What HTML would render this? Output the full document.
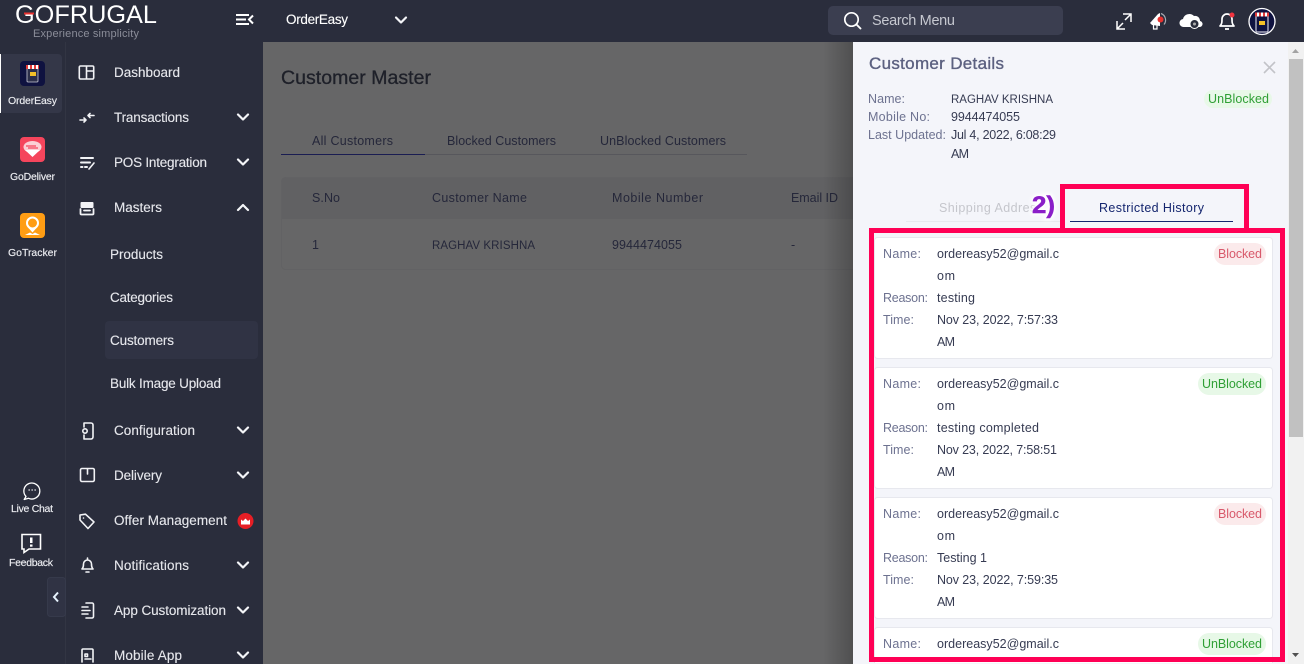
<!DOCTYPE html>
<html><head><meta charset="utf-8"><title>Customer Master</title>
<style>
html,body{margin:0;padding:0;width:1304px;height:664px;overflow:hidden;background:#666}
svg{display:block;overflow:hidden}
text{font-family:"Liberation Sans",sans-serif}
.m{font-size:13.5px;fill:#e6e7ec;stroke:#e6e7ec;stroke-width:.12}
.l{font-size:10.5px;fill:#ecedf1;stroke:#ecedf1;stroke-width:.15}
.t{font-size:12.5px;fill:#25273a}
.lb{font-size:12.5px;fill:#6d7290}
.v{font-size:12.5px;fill:#363b52}
.ic{fill:none;stroke:#f2f3f6;stroke-width:1.6;stroke-linecap:round;stroke-linejoin:round}
.ch{fill:none;stroke:#f4f5f8;stroke-width:2.2;stroke-linecap:round;stroke-linejoin:round}
.card{fill:#fff;stroke:#e7e8ee;stroke-width:1}
</style></head><body>
<svg width="1304" height="664" viewBox="0 0 1304 664" xmlns="http://www.w3.org/2000/svg">
<defs>
<clipPath id="pc"><rect x="853" y="42" width="436" height="622"/></clipPath>
<clipPath id="mc"><rect x="66" y="640" width="197" height="24"/></clipPath>
<filter id="glow" x="-40%" y="-40%" width="180%" height="180%"><feGaussianBlur stdDeviation="1.6"/></filter>
<linearGradient id="sh" x1="0" x2="1"><stop offset="0" stop-color="#000" stop-opacity="0"/><stop offset="1" stop-color="#000" stop-opacity=".22"/></linearGradient>
</defs>

<!-- main -->
<rect width="1304" height="664" fill="#666667"/>
<text x="281" y="84" style="font-size:19.5px;fill:#1e2029;stroke:#1e2029;stroke-width:.3" textLength="150">Customer Master</text>
<text class="t" x="312" y="145" textLength="81">All Customers</text>
<text class="t" x="447" y="145" textLength="109">Blocked Customers</text>
<text class="t" x="600" y="145" textLength="126">UnBlocked Customers</text>
<rect x="281" y="154" width="466" height="1" fill="#57575c"/>
<rect x="281" y="154" width="144" height="1" fill="#1a1d52"/>
<rect x="281.500" y="177.500" width="620" height="92" rx="4" fill="#666667" stroke="#626264"/>
<path d="M281.500 219V181.500a4 4 0 0 1 4-4H860V219Z" fill="#616163"/>
<text class="t" x="312" y="202" textLength="28">S.No</text>
<text class="t" x="432" y="202" textLength="95">Customer Name</text>
<text class="t" x="612" y="202" textLength="91">Mobile Number</text>
<text class="t" x="791" y="202" textLength="47">Email ID</text>
<text class="t" x="312" y="249">1</text>
<text class="t" x="432" y="249" style="font-size:11.500px" textLength="103">RAGHAV KRISHNA</text>
<text class="t" x="612" y="249" textLength="70">9944474055</text>
<text class="t" x="791" y="249">-</text>
<rect x="823" y="42" width="30" height="622" fill="url(#sh)"/>

<!-- sidebars -->
<rect x="0" y="42" width="263" height="622" fill="#2a2d3c"/>
<rect x="65" y="42" width="1" height="622" fill="#323543"/>
<rect x="0" y="54" width="62" height="59" rx="4" fill="#343748"/>
<rect x="0" y="54" width="1" height="59" fill="#fff"/>
<rect x="47.500" y="577.500" width="18" height="39" rx="3" fill="#303344" stroke="#363a4b"/>
<path d="M58 592.500l-4 4.500 4 4.500" fill="none" stroke="#e8f4ff" stroke-width="2"/>

<!-- header -->
<rect x="0" y="0" width="1304" height="42" fill="#2a2d3c"/>
<text x="15" y="23" style="font-size:25px;fill:#fff" textLength="142" lengthAdjust="spacingAndGlyphs">GOFRUGAL</text>
<rect x="24" y="12.500" width="10" height="2" fill="#e8312f"/>
<text x="33" y="37" style="font-size:11px;fill:#8b8d99" textLength="106">Experience simplicity</text>
<path d="M236 15h13M236 19.500h10M236 24h13" stroke="#fff" stroke-width="2"/>
<path d="M253 15.500l-4 4 4 4" fill="none" stroke="#fff" stroke-width="2"/>
<text x="286" y="24" style="font-size:13.500px;fill:#fff;stroke:#fff;stroke-width:.12" textLength="62">OrderEasy</text>
<path class="ch" d="M396 17.500l5 5 5-5"/>
<rect x="828" y="6" width="235" height="29" rx="5" fill="#3b3e50"/>
<circle cx="851.500" cy="19.500" r="6.700" fill="none" stroke="#fff" stroke-width="1.700"/>
<path d="M856.500 24.500l4 4" stroke="#fff" stroke-width="1.900" stroke-linecap="round"/>
<text x="872" y="25" style="font-size:14.500px;fill:#c6c8d0" textLength="83">Search Menu</text>
<!-- header right icons -->
<path d="M1123 14h8v8M1131 14l-6 6M1125 29h-8v-8M1117 29l6-6" fill="none" stroke="#fff" stroke-width="1.500"/>
<path d="M1150 23l8-9 2-1v13l-8-1z" fill="#fff"/>
<path d="M1153.500 25v4h3.500v-3.500" fill="none" stroke="#fff" stroke-width="1.200"/>
<circle cx="1160.500" cy="19.500" r="3" fill="#e8312f"/>
<path d="M1161 13.500a7 7 0 0 1 3 11" fill="none" stroke="#a7a9b2" stroke-width="1.200"/>
<path d="M1184 27a4 4 0 0 1-1-8 6.500 6.500 0 0 1 11-3 5 5 0 0 1 6 5 3 3 0 0 1-1 6z" fill="#fff"/>
<circle cx="1194.500" cy="24" r="4.500" fill="#2a2d3c" stroke="#fff" stroke-width="1"/>
<circle cx="1194.500" cy="24" r="1.500" fill="#aaa"/>
<path d="M1220 26c2-2 2-4 2-7a5 5 0 0 1 10 0c0 3 0 5 2 7z" fill="none" stroke="#fff" stroke-width="1.700" stroke-linejoin="round"/>
<path d="M1225 29h4" stroke="#fff" stroke-width="1.800"/>
<circle cx="1232" cy="15" r="2.500" fill="#f0333f"/>
<circle cx="1262" cy="21.500" r="13" fill="#0f1240" stroke="#fff" stroke-width="1.300"/>
<rect x="1256" y="15" width="12" height="17" rx="1" fill="none" stroke="#c9cad6" stroke-width="1.200"/>
<rect x="1255" y="12.500" width="14" height="4" fill="#e23b3b"/>
<path d="M1257 12.500h2v4h-2zM1261 12.500h2v4h-2zM1265 12.500h2v4h-2z" fill="#fff"/>
<rect x="1259" y="21" width="6" height="4" fill="#f3c028"/>

<!-- left apps -->
<rect x="20" y="61" width="25" height="25" rx="4" fill="#0f1240"/>
<rect x="27" y="66" width="11" height="16" rx="1" fill="#2c2f4a" stroke="#c9cad6" stroke-width=".8"/>
<rect x="26" y="65" width="13" height="4" fill="#e23b3b"/>
<path d="M28 65h2v4h-2zM32 65h2v4h-2zM36 65h2v4h-2z" fill="#fff"/>
<rect x="30" y="72" width="6" height="4" fill="#f3c028"/>
<text class="l" x="8" y="104" textLength="49">OrderEasy</text>
<rect x="20" y="137" width="25" height="25" rx="4" fill="#f5455c"/>
<ellipse cx="32.500" cy="147" rx="9" ry="6" fill="#fbd0d5"/>
<path d="M25 150h15l-7.500 7z" fill="#fff"/>
<path d="M26 146h10M28 148h10" stroke="#f5455c" stroke-width="1.300"/>
<text class="l" x="10" y="180" textLength="45">GoDeliver</text>
<rect x="20" y="213" width="25" height="25" rx="4" fill="#ff9d14"/>
<circle cx="32.500" cy="223" r="5.500" fill="none" stroke="#fff" stroke-width="2"/>
<path d="M28.500 228l4 4.500 4-4.500" fill="#fff"/>
<path d="M25 235l5-2.500 2.500 1.500 2.500-1.500 5 2.500z" fill="#fff"/>
<text class="l" x="8" y="256" textLength="49">GoTracker</text>
<path d="M26 496.500a8 8 0 1 1 2.500 1.800l-4.300 1.200z" fill="none" stroke="#fff" stroke-width="1.300" stroke-linejoin="round"/>
<path d="M28.500 490h1.300M31.500 490h1.300M34.500 490h1.300" stroke="#fff" stroke-width="1.200"/>
<text class="l" x="11" y="512" textLength="42">Live Chat</text>
<path d="M22 534.500h18.500v14.500H29l-5 3.500v-3.500h-2z" fill="none" stroke="#fff" stroke-width="1.600"/>
<rect x="30" y="537.500" width="2.500" height="5.500" fill="#fff"/><rect x="30" y="544.500" width="2.500" height="2.200" fill="#fff"/>
<text class="l" x="9" y="566" textLength="44">Feedback</text>

<!-- menu -->
<text class="m" x="114" y="77" textLength="66">Dashboard</text>
<text class="m" x="114" y="122" textLength="75">Transactions</text>
<text class="m" x="114" y="167" textLength="93">POS Integration</text>
<text class="m" x="114" y="212" textLength="48">Masters</text>
<text class="m" x="110" y="259" textLength="53">Products</text>
<text class="m" x="110" y="302" textLength="63">Categories</text>
<rect x="105" y="321" width="153" height="38" rx="4" fill="#303344"/>
<text class="m" x="110" y="345" textLength="64">Customers</text>
<text class="m" x="110" y="388" textLength="111">Bulk Image Upload</text>
<text class="m" x="114" y="435" textLength="81">Configuration</text>
<text class="m" x="114" y="480" textLength="48">Delivery</text>
<text class="m" x="114" y="525" textLength="113">Offer Management</text>
<text class="m" x="114" y="570" textLength="75">Notifications</text>
<text class="m" x="114" y="615" textLength="112">App Customization</text>
<text class="m" x="114" y="660" textLength="68">Mobile App</text>

<path class="ch" d="M238 114.500l5 5 5-5M238 159.500l5 5 5-5M238 427.500l5 5 5-5M238 472.500l5 5 5-5M238 562.500l5 5 5-5M238 607.500l5 5 5-5M238 652.500l5 5 5-5M238 210l5-5 5 5"/>
<circle cx="245.500" cy="521" r="8" fill="#e61e25"/>
<path d="M241 524.500v-5l2 1.500 2.500-2.500 2.500 2.500 2-1.500v5z" fill="#fff"/>

<!-- menu icons -->
<path class="ic" d="M80.500 66h12a1.200 1.200 0 0 1 1.200 1.200v10.600a1.200 1.200 0 0 1-1.200 1.200h-12a1.200 1.200 0 0 1-1.200-1.200V67.200a1.200 1.200 0 0 1 1.200-1.200zM86.500 66v13M86.500 71h7"/>
<path class="ic" d="M80 120h6M84 118l2 2-2 2M94 115.500h-6M90 113.500l-2 2 2 2"/>
<path class="ic" d="M81 158h12M81 162.500h9M81 167h1.500M85 167h2" style="stroke-width:2"/>
<path class="ic" d="M89 169l5-6"/>
<rect x="80.500" y="202" width="13" height="6" rx="1" fill="#f2f3f6"/>
<path class="ic" d="M80.500 209v4.500a1 1 0 0 0 1 1h11a1 1 0 0 0 1-1V209M84 210.500h6" style="stroke-width:1.800"/>
<path class="ic" d="M84 423h7a2 2 0 0 1 2 2v12a2 2 0 0 1-2 2h-7v-4M84 423v4"/>
<circle cx="85" cy="431" r="2.200" class="ic"/>
<path class="ic" d="M82 468.500h11a1.500 1.500 0 0 1 1.300 1.500v10a1.500 1.500 0 0 1-1.500 1.500H82a1.500 1.500 0 0 1-1.500-1.500v-10a1.500 1.500 0 0 1 1.500-1.500zM87.500 469v5"/>
<path class="ic" d="M80 515l5.500-.8 8.500 7.800-6 6.500-8-8.500z"/>
<circle cx="83.500" cy="518" r=".8" fill="#f2f3f6"/>
<path class="ic" d="M82 569c1.500-1.500 1.500-3 1.500-5a4 4 0 0 1 8 0c0 2 0 3.500 1.500 5zM87.500 558v1.500M86 572h3"/>
<path class="ic" d="M86 603h6a1.500 1.500 0 0 1 1.500 1.500v12a1.500 1.500 0 0 1-1.500 1.500h-6M82 607h6M82 610.500h8M82 614h6"/>
<g clip-path="url(#mc)"><path class="ic" d="M82 662V650a1 1 0 0 1 1-1h9a1 1 0 0 1 1 1v12M85 654h2.500v2.500H85zM85 659h6"/></g>

<!-- right panel -->
<rect x="853" y="42" width="436" height="622" fill="#f4f5fa"/>
<rect x="1288" y="42" width="16" height="622" fill="#f1f1f1"/>
<rect x="1289" y="59" width="14" height="378" fill="#c1c1c1"/>
<path d="M1292 53l3.500-4 3.500 4z" fill="#a3a3a3"/>
<path d="M1292 653l3.500 4 3.500-4z" fill="#505050"/>

<text x="869" y="69" style="font-size:17px;fill:#5c6180;stroke:#5c6180;stroke-width:.35" textLength="135">Customer Details</text>
<path d="M1264 62l11 11M1275 62l-11 11" stroke="#c2c3c8" stroke-width="1.600"/>

<text class="lb" x="868" y="103" textLength="37">Name:</text>
<text class="lb" x="868" y="121" textLength="62">Mobile No:</text>
<text class="lb" x="868" y="139" textLength="78">Last Updated:</text>
<text class="v" x="951" y="103" style="font-size:11.500px" textLength="102">RAGHAV KRISHNA</text>
<text class="v" x="951" y="121" textLength="69">9944474055</text>
<text class="v" x="951" y="139" textLength="105">Jul 4, 2022, 6:08:29</text>
<text class="v" x="951" y="158" textLength="18">AM</text>
<rect x="1204" y="90" width="68" height="18" rx="9" fill="#e8f8e8"/>
<text x="1208" y="103" style="font-size:12.500px;fill:#2f9f35" textLength="61">UnBlocked</text>

<text x="939" y="212" style="font-size:12.500px;fill:#c5c6cc" textLength="104">Shipping Address</text>
<rect x="906" y="221" width="154" height="1" fill="#e8e9ee"/>
<text x="1099" y="212" style="font-size:12.500px;fill:#14256e" textLength="105">Restricted History</text>
<rect x="1070" y="221" width="163" height="1" fill="#14256e"/>

<g clip-path="url(#pc)">
<rect class="card" x="874.500" y="237.500" width="398" height="121" rx="3"/>
<rect class="card" x="874.500" y="367.500" width="398" height="121" rx="3"/>
<rect class="card" x="874.500" y="497.500" width="398" height="121" rx="3"/>
<path class="card" d="M874.500 663v-32.500a3 3 0 0 1 3-3h392a3 3 0 0 1 3 3V663"/>

<!-- card 1 -->
<text class="lb" x="883" y="258" textLength="38">Name:</text>
<text class="v" x="937" y="258" textLength="122">ordereasy52@gmail.c</text>
<text class="v" x="937" y="280" textLength="18">om</text>
<text class="lb" x="883" y="302" textLength="45">Reason:</text>
<text class="v" x="937" y="302" textLength="38">testing</text>
<text class="lb" x="883" y="324" textLength="31">Time:</text>
<text class="v" x="937" y="324" textLength="121">Nov 23, 2022, 7:57:33</text>
<text class="v" x="937" y="346" textLength="18">AM</text>
<rect x="1214" y="243" width="52" height="22" rx="11" fill="#fbeaeb"/>
<text x="1218" y="258" style="font-size:12.500px;fill:#d8596b" textLength="44">Blocked</text>

<!-- card 2 -->
<text class="lb" x="883" y="388" textLength="38">Name:</text>
<text class="v" x="937" y="388" textLength="122">ordereasy52@gmail.c</text>
<text class="v" x="937" y="410" textLength="18">om</text>
<text class="lb" x="883" y="432" textLength="45">Reason:</text>
<text class="v" x="937" y="432" textLength="102">testing completed</text>
<text class="lb" x="883" y="454" textLength="31">Time:</text>
<text class="v" x="937" y="454" textLength="120">Nov 23, 2022, 7:58:51</text>
<text class="v" x="937" y="476" textLength="18">AM</text>
<rect x="1198" y="373" width="68" height="22" rx="11" fill="#e7f8e7"/>
<text x="1202" y="388" style="font-size:12.500px;fill:#2f9f35" textLength="60">UnBlocked</text>

<!-- card 3 -->
<text class="lb" x="883" y="518" textLength="38">Name:</text>
<text class="v" x="937" y="518" textLength="122">ordereasy52@gmail.c</text>
<text class="v" x="937" y="540" textLength="18">om</text>
<text class="lb" x="883" y="562" textLength="45">Reason:</text>
<text class="v" x="937" y="562" textLength="50">Testing 1</text>
<text class="lb" x="883" y="584" textLength="31">Time:</text>
<text class="v" x="937" y="584" textLength="121">Nov 23, 2022, 7:59:35</text>
<text class="v" x="937" y="606" textLength="18">AM</text>
<rect x="1214" y="503" width="52" height="22" rx="11" fill="#fbeaeb"/>
<text x="1218" y="518" style="font-size:12.500px;fill:#d8596b" textLength="44">Blocked</text>

<!-- card 4 -->
<text class="lb" x="883" y="648" textLength="38">Name:</text>
<text class="v" x="937" y="648" textLength="122">ordereasy52@gmail.c</text>
<rect x="1198" y="633" width="68" height="22" rx="11" fill="#e7f8e7"/>
<text x="1202" y="648" style="font-size:12.500px;fill:#2f9f35" textLength="60">UnBlocked</text>
</g>

<!-- annotations -->
<rect x="871.500" y="230.500" width="411" height="429" fill="none" stroke="#ff0055" stroke-width="5"/>
<rect x="1062.500" y="186.500" width="184" height="44" fill="none" stroke="#ff0055" stroke-width="5"/>
<text x="1032" y="213" style="font-size:24px;font-weight:bold;fill:#fff;stroke:#fff;stroke-width:4" filter="url(#glow)" textLength="23" lengthAdjust="spacingAndGlyphs">2)</text>
<text x="1032" y="213" style="font-size:24px;font-weight:bold;fill:#8a1ec8;stroke:#8a1ec8;stroke-width:.5" textLength="23" lengthAdjust="spacingAndGlyphs">2)</text>
</svg>
</body></html>
